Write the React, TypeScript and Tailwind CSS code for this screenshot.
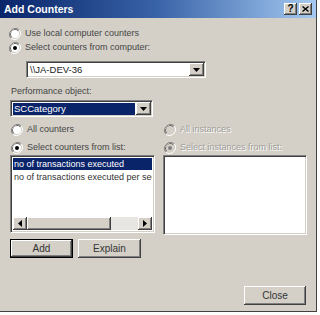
import React from "react";

const font = { fontFamily: '"Liberation Sans", Arial, sans-serif' };

function Radio({ checked, disabled }: { checked?: boolean; disabled?: boolean }) {
  return (
    <svg width="12" height="12" viewBox="0 0 12 12" className="shrink-0">
      <path d="M10.2 1.8 A6 6 0 0 0 1.8 10.2" fill="none" stroke="#808080" strokeWidth="1" />
      <path d="M9.4 2.6 A4.9 4.9 0 0 0 2.6 9.4" fill="none" stroke="#404040" strokeWidth="1" />
      <path d="M1.8 10.2 A6 6 0 0 0 10.2 1.8" fill="none" stroke="#ffffff" strokeWidth="1" />
      <path d="M2.6 9.4 A4.9 4.9 0 0 0 9.4 2.6" fill="none" stroke="#d4d0c8" strokeWidth="1" />
      <circle cx="6" cy="6" r="4" fill={disabled ? "#d4d0c8" : "#ffffff"} />
      {checked && <circle cx="6" cy="6" r="2" fill={disabled ? "#808080" : "#000000"} />}
    </svg>
  );
}

function RadioRow({ label, checked, disabled, className }: { label: string; checked?: boolean; disabled?: boolean; className?: string }) {
  return (
    <div className={"flex items-center gap-[4px] h-[13px] " + (className ?? "")}>
      <Radio checked={checked} disabled={disabled} />
      <span
        className={
          "text-[9px] leading-[13px] whitespace-nowrap " +
          (disabled ? "text-[#a09e98] [text-shadow:1px_1px_0_#ffffff]" : "text-[#444]")
        }
      >
        {label}
      </span>
    </div>
  );
}

function ArrowButton() {
  return (
    <div className="w-[15px] h-[13px] bg-[#d4d0c8] shadow-[inset_-1px_-1px_0_#404040,inset_1px_1px_0_#ffffff,inset_-2px_-2px_0_#808080] flex items-center justify-center shrink-0">
      <svg width="7" height="4" viewBox="0 0 7 4">
        <path d="M0 0 H7 L3.5 4 Z" fill="#000" />
      </svg>
    </div>
  );
}

function Combo({ text, selected, className }: { text: string; selected?: boolean; className?: string }) {
  return (
    <div
      className={
        "h-[17px] bg-white border border-t-[#808080] border-l-[#808080] border-b-white border-r-white shadow-[inset_1px_1px_0_#404040,inset_-1px_-1px_0_#d4d0c8] flex items-center p-[1px] " +
        (className ?? "")
      }
    >
      <div className="flex-1 h-full pl-[1px] pr-[1px] flex items-center">
        <div
          className={
            "h-[12px] flex items-center text-[9.5px] leading-[12px] px-[1px] " +
            (selected ? "bg-[#0a246a] text-white w-full" : "text-[#222]")
          }
        >
          {text}
        </div>
      </div>
      <ArrowButton />
    </div>
  );
}

function Button({ label, isDefault, className }: { label: string; isDefault?: boolean; className?: string }) {
  return (
    <div
      className={
        "h-[19px] bg-[#d4d0c8] flex items-center justify-center text-[10px] text-[#333] " +
        (isDefault
          ? "border border-black shadow-[inset_-1px_-1px_0_#404040,inset_1px_1px_0_#ffffff,inset_-2px_-2px_0_#808080] "
          : "shadow-[inset_-1px_-1px_0_#404040,inset_1px_1px_0_#ffffff,inset_-2px_-2px_0_#808080] ") +
        (className ?? "")
      }
    >
      {label}
    </div>
  );
}

function ScrollBtn({ dir }: { dir: "l" | "r" }) {
  return (
    <div className="w-[14px] h-[13px] bg-[#d4d0c8] shadow-[inset_-1px_-1px_0_#404040,inset_1px_1px_0_#ffffff,inset_-2px_-2px_0_#808080] flex items-center justify-center shrink-0">
      <svg width="4" height="7" viewBox="0 0 4 7">
        {dir === "l" ? <path d="M4 0 V7 L0 3.5 Z" fill="#000" /> : <path d="M0 0 V7 L4 3.5 Z" fill="#000" />}
      </svg>
    </div>
  );
}

const sunken =
  "border border-t-[#808080] border-l-[#808080] border-b-white border-r-white shadow-[inset_1px_1px_0_#404040,inset_-1px_-1px_0_#d4d0c8]";

export default function App() {
  return (
    <div className="w-[320px] h-[315px] bg-white overflow-hidden" style={font}>
      <div className="w-[317px] h-[312px] bg-[#d4d0c8] border-r border-b border-[#404040] flex flex-col">
        {/* Title bar */}
        <div className="h-[18px] bg-gradient-to-r from-[#0a246a] via-[#3a64a8] to-[#a6caf0] flex items-center justify-between pl-[4px] pr-[4px]">
          <span className="text-white font-bold text-[10.5px] leading-[14px]">Add Counters</span>
          <div className="flex gap-[2px]">
            <div className="w-[13px] h-[12px] bg-[#d4d0c8] shadow-[inset_-1px_-1px_0_#404040,inset_1px_1px_0_#ffffff,inset_-2px_-2px_0_#808080] flex items-center justify-center text-[10px] font-bold leading-none text-black">
              ?
            </div>
            <div className="w-[13px] h-[12px] bg-[#d4d0c8] shadow-[inset_-1px_-1px_0_#404040,inset_1px_1px_0_#ffffff,inset_-2px_-2px_0_#808080] flex items-center justify-center">
              <svg width="7" height="6" viewBox="0 0 7 6">
                <path d="M0.5 0.5 L6.5 5.5 M6.5 0.5 L0.5 5.5" stroke="#000" strokeWidth="1.4" />
              </svg>
            </div>
          </div>
        </div>

        {/* Body */}
        <div className="flex flex-col pl-[10px]">
          <RadioRow label="Use local computer counters" className="mt-[9px] ml-[-1px]" />
          <RadioRow label="Select counters from computer:" checked className="mt-[1px] ml-[-1px]" />
          <Combo text="\\JA-DEV-36" className="mt-[7px] ml-[16px] w-[180px]" />
          <div className="mt-[7px] text-[9px] leading-[13px] text-[#444] ml-[1px]">Performance object:</div>
          <Combo text="SCCategory" selected className="mt-[2px] w-[143px]" />

          <div className="flex mt-[6px]">
            {/* left column */}
            <div className="w-[145px] flex flex-col">
              <RadioRow label="All counters" className="ml-[1px]" />
              <RadioRow label="Select counters from list:" checked className="mt-[5px] ml-[1px]" />
              <div className={"mt-[1px] h-[78px] bg-white flex flex-col p-[2px] " + sunken}>
                <div className="flex-1 overflow-hidden">
                  <div className="h-[12px] bg-[#0a246a] text-white text-[9px] leading-[12px] whitespace-nowrap pl-[1px]">
                    no of transactions executed
                  </div>
                  <div className="h-[12px] text-[#333] text-[9px] leading-[12px] whitespace-nowrap pl-[1px] mt-[1px]">
                    no of transactions executed per sec
                  </div>
                </div>
                <div className="flex h-[13px]">
                  <ScrollBtn dir="l" />
                  <div className="w-[84px] h-[13px] bg-[#d4d0c8] shadow-[inset_-1px_-1px_0_#404040,inset_1px_1px_0_#ffffff,inset_-2px_-2px_0_#808080]" />
                  <div className="flex-1 h-[13px] bg-[#e8e6e2]" />
                  <ScrollBtn dir="r" />
                </div>
              </div>
            </div>
            {/* right column */}
            <div className="w-[144px] ml-[8px] flex flex-col">
              <RadioRow label="All instances" disabled className="ml-[1px]" />
              <RadioRow label="Select instances from list:" checked disabled className="mt-[5px] ml-[1px]" />
              <div className={"mt-[1px] h-[80px] bg-white " + sunken} />
            </div>
          </div>

          <div className="flex gap-[5px] mt-[4px]">
            <Button label="Add" isDefault className="w-[63px]" />
            <Button label="Explain" className="w-[63px]" />
          </div>

          <div className="flex justify-end mt-[28px] pr-[10px]">
            <Button label="Close" className="w-[62px]" />
          </div>
        </div>
      </div>
    </div>
  );
}
